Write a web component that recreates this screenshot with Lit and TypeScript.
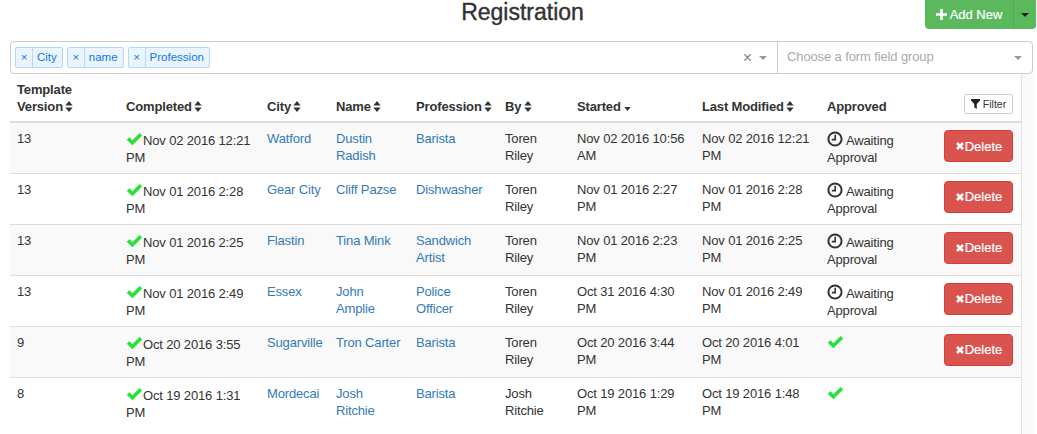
import { LitElement, html, css } from "lit";
import { customElement } from "lit/decorators.js";

const check = html`<svg class="check" viewBox="0 0 16 13"><path d="M1 7.2 3.2 5 6 7.8 12.8 1 15 3.2 6 12.2Z" fill="#28e03c" stroke="#28e03c" stroke-width=".5"/></svg>`;
const clock = html`<svg class="clock" viewBox="0 0 16 16"><circle cx="8" cy="8" r="6.6" fill="none" stroke="#333" stroke-width="2"/><path d="M8.2 3.8V8.6H4.8" fill="none" stroke="#333" stroke-width="1.6"/></svg>`;
const sort = html`<svg class="sort" viewBox="0 0 8 12"><path d="M4 0 8 4.8H0ZM4 12 0 7.2H8Z" fill="#333"/></svg>`;
const sortDown = html`<svg class="sortd" viewBox="0 0 8 5"><path d="M0 0H8L4 5Z" fill="#333"/></svg>`;

type Row = { v: string; c: string; city: string; name: string; prof: string; by: string; s: string; m: string; ok: boolean; del: boolean };
const rows: Row[] = [
  { v: "13", c: "Nov 02 2016 12:21 PM", city: "Watford", name: "Dustin Radish", prof: "Barista", by: "Toren Riley", s: "Nov 02 2016 10:56 AM", m: "Nov 02 2016 12:21 PM", ok: false, del: true },
  { v: "13", c: "Nov 01 2016 2:28 PM", city: "Gear City", name: "Cliff Pazse", prof: "Dishwasher", by: "Toren Riley", s: "Nov 01 2016 2:27 PM", m: "Nov 01 2016 2:28 PM", ok: false, del: true },
  { v: "13", c: "Nov 01 2016 2:25 PM", city: "Flastin", name: "Tina Mink", prof: "Sandwich Artist", by: "Toren Riley", s: "Nov 01 2016 2:23 PM", m: "Nov 01 2016 2:25 PM", ok: false, del: true },
  { v: "13", c: "Nov 01 2016 2:49 PM", city: "Essex", name: "John Amplie", prof: "Police Officer", by: "Toren Riley", s: "Oct 31 2016 4:30 PM", m: "Nov 01 2016 2:49 PM", ok: false, del: true },
  { v: "9", c: "Oct 20 2016 3:55 PM", city: "Sugarville", name: "Tron Carter", prof: "Barista", by: "Toren Riley", s: "Oct 20 2016 3:44 PM", m: "Oct 20 2016 4:01 PM", ok: true, del: true },
  { v: "8", c: "Oct 19 2016 1:31 PM", city: "Mordecai", name: "Josh Ritchie", prof: "Barista", by: "Josh Ritchie", s: "Oct 19 2016 1:29 PM", m: "Oct 19 2016 1:48 PM", ok: true, del: false },
];

@customElement("app-root")
export class AppRoot extends LitElement {
  static styles = css`
    :host { display: block; width: 1037px; height: 434px; overflow: hidden; font-family: "Liberation Sans", Arial, sans-serif; font-size: 13px; line-height: 17px; color: #333; background: #fff; }
    .top { height: 41px; display: flex; justify-content: center; position: relative; padding-left: 8px; box-sizing: border-box; }
    h1 { margin: 0; font-size: 23px; font-weight: 400; line-height: 24px; color: #333; -webkit-text-stroke: .4px #333; }
    .add { position: absolute; left: 925px; top: 0; width: 111px; height: 29px; display: flex; background: #5cb85c; border-radius: 0 0 4px 4px; color: #fff; font-weight: 400; }
    .add .main { width: 88px; display: flex; align-items: center; justify-content: center; gap: 3px; font-size: 13px; border-right: 1px solid #4cae4c; -webkit-text-stroke: .2px #fff; }
    .add .main svg { width: 11px; height: 11px; }
    .add .car { flex: 1; display: flex; align-items: center; justify-content: center; }
    .car i { border-top: 4px solid #222; border-left: 4px solid transparent; border-right: 4px solid transparent; }
    .selects { margin: 0 4px 0 10px; height: 33px; display: flex; border: 1px solid #ccc; border-radius: 4px; background: #fff; box-sizing: border-box; }
    .multi { width: 767px; box-sizing: border-box; border-right: 1px solid #ccc; display: flex; align-items: center; padding-left: 4px; gap: 4px; }
    .tag { display: flex; height: 21px; box-sizing: border-box; border: 1px solid #b3d8ff; border-radius: 2px; background: #ebf5ff; color: #0a78f0; font-size: 11.5px; line-height: 19px; }
    .tag b { font-weight: 400; width: 16px; text-align: center; border-right: 1px solid #b3d8ff; }
    .tag span { padding: 0 5px 0 4px; }
    .multi .end, .single .end { margin-left: auto; display: flex; align-items: center; }
    .x { color: #888; font-size: 16px; margin-right: 7px; }
    .arrow { border-top: 4px solid #999; border-left: 4px solid transparent; border-right: 4px solid transparent; margin-right: 10px; }
    .single { flex: 1; display: flex; align-items: center; padding: 0 0 2px 9px; color: #aaa; font-size: 13px; letter-spacing: -0.12px; box-sizing: border-box; }
    .single .arrow { margin-top: 2px; }
    .wrap { margin-left: 10px; width: 1023px; height: 360px; background: #fafafa; }
    table { table-layout: fixed; border-collapse: collapse; width: 1012px; background: #fff; border-right: 1px solid #e4e4e4; letter-spacing: -0.15px; }
    th { text-align: left; vertical-align: bottom; font-weight: 700; padding: 7px 0 6px 7px; height: 48px; box-sizing: border-box; border-bottom: 2px solid #ddd; }
    th.wrapped { padding-right: 7px; }
    td { vertical-align: top; padding: 7px 7px 0 7px; border-bottom: 1px solid #ddd; height: 51px; box-sizing: border-box; }
    td.prof { padding-right: 10px; }
    tbody tr:nth-child(odd) td { background: #f9f9f9; }
    tbody tr:last-child td { height: 70px; border-bottom: 0; }
    a { color: #337ab7; text-decoration: none; }
    .sort { width: 8px; height: 11px; margin-left: -1px; vertical-align: -1px; }
    .sortd { width: 7px; height: 4px; vertical-align: 0; }
    .check { width: 17px; height: 14px; vertical-align: -1px; }
    .clock { width: 16px; height: 16px; vertical-align: -2px; margin-right: 3px; }
    .cmp { display: block; margin-top: 2px; }
    .aw { display: block; margin-top: 1px; }
    td.actions { padding: 7px 8px 0 0; }
    th.actions { padding: 0 8px 7px 0; text-align: right; }
    .filter { display: inline-flex; align-items: center; justify-content: center; gap: 3px; width: 49px; height: 20px; box-sizing: border-box; border: 1px solid #ccc; border-radius: 3px; background: #fff; font-size: 10.5px; font-weight: 400; vertical-align: bottom; letter-spacing: 0; }
    .filter svg { width: 9px; height: 10px; }
    .del { display: flex; align-items: center; justify-content: center; margin-left: auto; width: 69px; height: 32px; box-sizing: border-box; background: #d9534f; border: 1px solid #d43f3a; border-radius: 4px; color: #fff; font-size: 13px; letter-spacing: 0; -webkit-text-stroke: .2px #fff; }
    .del svg { width: 10px; height: 10px; }
  `;

  render() {
    return html`
      <div class="top">
        <h1>Registration</h1>
        <div class="add">
          <div class="main"><svg viewBox="0 0 10 10"><path d="M5 0V10M0 5H10" stroke="#fff" stroke-width="2.4"/></svg>Add New</div>
          <div class="car"><i></i></div>
        </div>
      </div>
      <div class="selects">
        <div class="multi">
          ${["City", "name", "Profession"].map((t) => html`<div class="tag"><b>×</b><span>${t}</span></div>`)}
          <div class="end"><span class="x">×</span><i class="arrow"></i></div>
        </div>
        <div class="single">Choose a form field group<div class="end"><i class="arrow"></i></div></div>
      </div>
      <div class="wrap">
        <table>
          <colgroup>
            <col style="width:109px" /><col style="width:141px" /><col style="width:69px" /><col style="width:80px" /><col style="width:89px" /><col style="width:72px" /><col style="width:125px" /><col style="width:125px" /><col style="width:117px" /><col />
          </colgroup>
          <thead>
            <tr>
              <th class="wrapped">Template Version ${sort}</th>
              <th>Completed ${sort}</th>
              <th>City ${sort}</th>
              <th>Name ${sort}</th>
              <th>Profession ${sort}</th>
              <th>By ${sort}</th>
              <th>Started ${sortDown}</th>
              <th>Last Modified ${sort}</th>
              <th>Approved</th>
              <th class="actions">
                <span class="filter"><svg viewBox="0 0 10 11"><path d="M0 0H10V1.5L6.4 5.5V11L3.6 9V5.5L0 1.5Z" fill="#222"/></svg>Filter</span>
              </th>
            </tr>
          </thead>
          <tbody>
            ${rows.map(
              (r) => html`<tr>
                <td>${r.v}</td>
                <td><span class="cmp">${check}${r.c}</span></td>
                <td><a>${r.city}</a></td>
                <td><a>${r.name}</a></td>
                <td class="prof"><a>${r.prof}</a></td>
                <td>${r.by}</td>
                <td>${r.s}</td>
                <td>${r.m}</td>
                <td><span class="aw">${r.ok ? check : html`${clock}Awaiting Approval`}</span></td>
                <td class="actions">
                  ${r.del
                    ? html`<span class="del"><svg viewBox="0 0 10 10"><path d="M2 2 8 8M8 2 2 8" stroke="#fff" stroke-width="2.6"/></svg>Delete</span>`
                    : ""}
                </td>
              </tr>`
            )}
          </tbody>
        </table>
      </div>
    `;
  }
}
